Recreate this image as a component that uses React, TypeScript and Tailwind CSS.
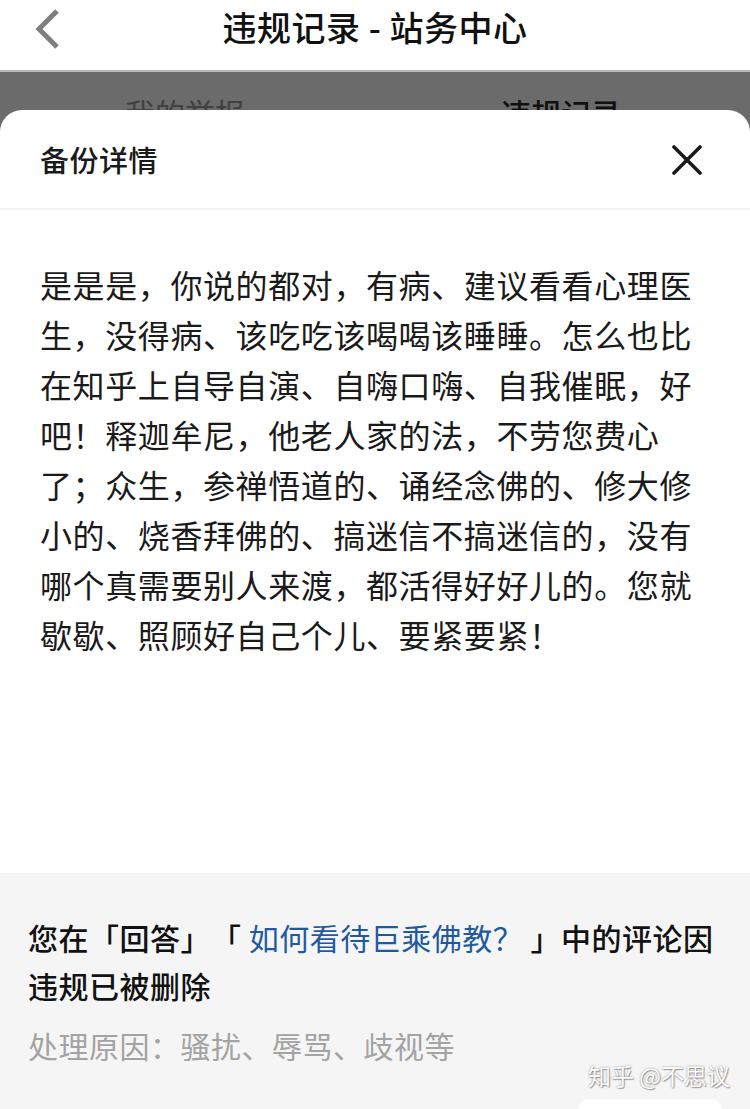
import React from "react";

const FONT = '"Noto Sans CJK SC", "Noto Sans", sans-serif';

export default function App() {
  return (
    <div
      className="relative flex h-[1109px] w-[750px] flex-col overflow-hidden bg-white"
      style={{ fontFamily: FONT }}
    >
      {/* Top nav */}
      <div className="relative flex h-[72px] shrink-0 items-center justify-center border-b-2 border-[#b8b8b8] bg-white">
        <svg
          className="absolute left-[30px] top-[8px]"
          width="34"
          height="42"
          viewBox="0 0 34 42"
        >
          <polyline
            points="27,3 9,21 27,39"
            fill="none"
            stroke="#7f7f7f"
            strokeWidth="5"
            strokeLinecap="butt"
            strokeLinejoin="miter"
          />
        </svg>
        <div className="-mt-[17px] text-[34px] font-medium leading-none tracking-[0.5px] text-[#111]">
          违规记录 - 站务中心
        </div>
      </div>

      {/* Tabs under overlay */}
      <div className="relative flex-1">
        <div className="flex h-[100px] items-start pt-[20px]">
          <div className="flex flex-1 justify-center pr-[6px] text-[30px] leading-[40px] text-[#999]">
            我的举报
          </div>
          <div className="flex flex-1 justify-center pr-[4px] text-[30px] font-medium leading-[40px] text-[#262626]">
            违规记录
          </div>
        </div>

        {/* Overlay */}
        <div className="absolute inset-0 flex flex-col bg-[rgba(0,0,0,0.58)] pt-[38px]">
          <div className="flex flex-1 flex-col overflow-hidden rounded-t-[22px] bg-white">
            {/* Sheet header */}
            <div className="flex h-[100px] shrink-0 items-center justify-between border-b-2 border-[#f2f2f2] pl-[40px] pr-[48px]">
              <div className="text-[29px] font-medium leading-none tracking-[0.5px] text-[#1a1a1a]">
                备份详情
              </div>
              <svg width="30" height="30" viewBox="0 0 30 30" className="mt-[2px]">
                <line x1="2" y1="2" x2="28" y2="28" stroke="#1a1a1a" strokeWidth="3.6" strokeLinecap="round" />
                <line x1="28" y1="2" x2="2" y2="28" stroke="#1a1a1a" strokeWidth="3.6" strokeLinecap="round" />
              </svg>
            </div>

            {/* Content */}
            <div className="flex-1 px-[40px] pt-[49px]">
              <p className="text-[32px] leading-[50px] tracking-[0.6px] text-[#1a1a1a]">
                是是是，你说的都对，有病、建议看看心理医生，没得病、该吃吃该喝喝该睡睡。怎么也比在知乎上自导自演、自嗨口嗨、自我催眠，好吧！释迦牟尼，他老人家的法，不劳您费心了；众生，参禅悟道的、诵经念佛的、修大修小的、烧香拜佛的、搞迷信不搞迷信的，没有哪个真需要别人来渡，都活得好好儿的。您就歇歇、照顾好自己个儿、要紧要紧！
              </p>
            </div>

            {/* Bottom info */}
            <div className="relative h-[236px] shrink-0 bg-[#f5f5f5] px-[28px] pt-[40px]">
              <p className="text-[30px] font-medium leading-[48px] tracking-[0.5px] text-[#121212] [text-spacing-trim:space-all]">
                您在「回答」「 <span className="font-normal text-[#1f5aa0]">如何看待巨乘佛教？</span> 」中的评论因违规已被删除
              </p>
              <p className="mt-[12px] text-[30px] leading-[48px] tracking-[0.5px] text-[#a3a3a3] [text-spacing-trim:space-all]">
                处理原因：骚扰、辱骂、歧视等
              </p>

              <div
                className="absolute right-[20px] top-[191px] text-[23px] leading-none text-white"
                style={{ textShadow: "0 0 2px rgba(0,0,0,0.45), 1px 1px 1px rgba(0,0,0,0.3)" }}
              >
                知乎 @不思议
              </div>
              <div className="absolute bottom-[-20px] right-[28px] h-[30px] w-[144px] rounded-[10px] bg-white" />
            </div>
          </div>
        </div>
      </div>
    </div>
  );
}
